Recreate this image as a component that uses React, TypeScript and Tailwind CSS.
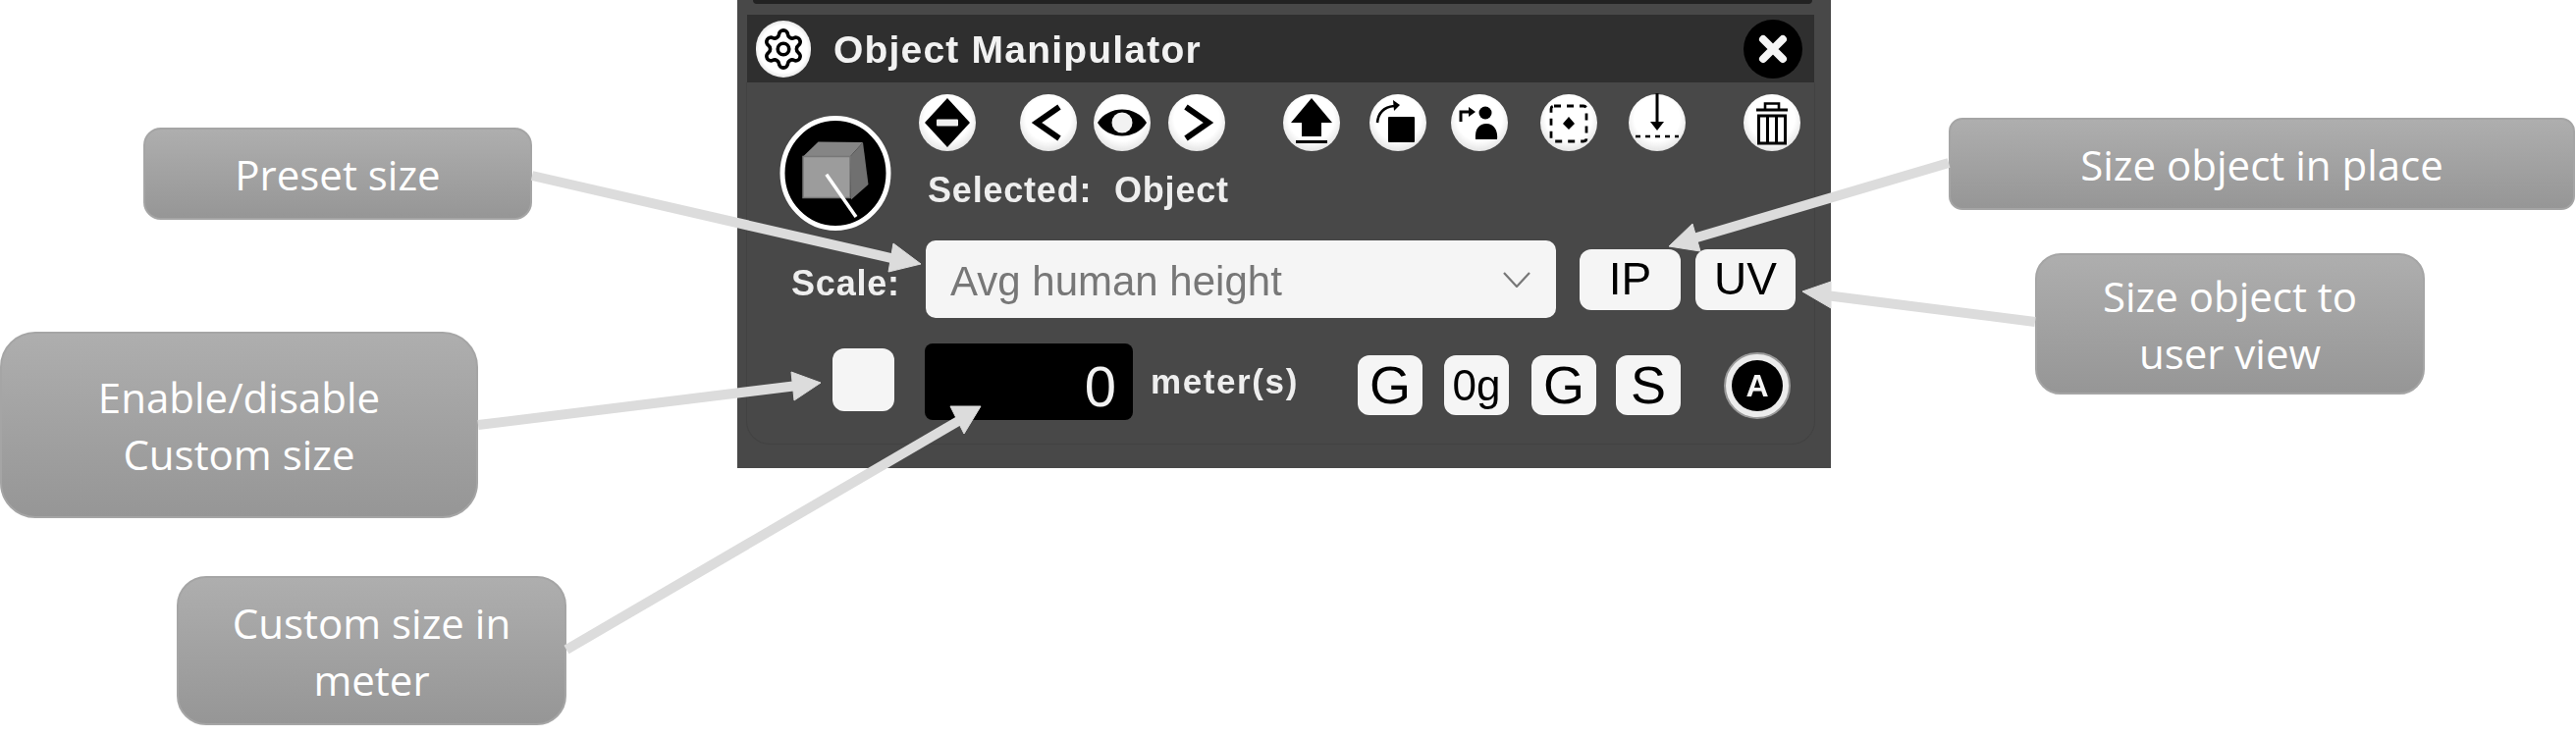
import React from "react";
import { Settings } from "lucide-react";

const callout =
  "absolute flex items-center justify-center text-center text-white font-['Open_Sans',sans-serif] text-[42px] leading-[58px] pt-[2px] border-2 border-[#a5a5a5] bg-gradient-to-b from-[#aeaeae] to-[#969696]";

function Round({ ml, children }: { ml: string; children: React.ReactNode }) {
  return (
    <div
      className={`${ml} w-[58px] h-[58px] shrink-0 rounded-full bg-[radial-gradient(circle_at_50%_42%,#ffffff_52%,#e2e2e2_78%,#9a9a9a_100%)]`}
    >
      <svg viewBox="0 0 58 58" className="w-[58px] h-[58px] overflow-visible">
        {children}
      </svg>
    </div>
  );
}

function Key({ ml, label, w, h, size }: { ml: string; label: string; w: string; h: string; size: string }) {
  return (
    <div
      className={`${ml} ${w} ${h} ${size} shrink-0 flex items-center justify-center rounded-[12px] bg-[#f5f5f5] text-black font-['Liberation_Sans',sans-serif]`}
    >
      {label}
    </div>
  );
}

export default function App() {
  return (
    <div className="relative w-[2624px] h-[751px] bg-white overflow-hidden font-['Liberation_Sans',sans-serif]">
      <div className="ml-[751px] w-[1114px] h-[477px] bg-[#484848] blur-[0.6px]">
        <div className="ml-[16px] w-[1079px] h-[4px] bg-[#222222] rounded-b-[6px]" />
        <div className="mt-[11px] ml-[10px] w-[1087px] h-[69px] bg-[#2f2f2f] flex items-center">
          <div className="ml-[9px] w-[56px] h-[58px] rounded-full bg-[radial-gradient(circle,#ffffff_60%,#cfcfcf_85%,#777777_100%)] flex items-center justify-center">
            <Settings size={46} strokeWidth={1.9} color="#000000" />
          </div>
          <span className="ml-[23px] pt-[3px] text-[39px] font-bold text-[#f2f2f2] tracking-[1.2px]">Object Manipulator</span>
          <div className="ml-auto mr-[12px] w-[60px] h-[60px] rounded-full bg-black flex items-center justify-center">
            <svg viewBox="0 0 60 60" className="w-[60px] h-[60px]">
              <path d="M20 20 L40 40 M40 20 L20 40" stroke="#f5f5f5" strokeWidth="8" strokeLinecap="round" />
            </svg>
          </div>
        </div>

        <div className="ml-[9px] w-[1089px] h-[369px] border-x border-b border-[#424242] rounded-b-[24px]">
          <div className="flex h-[161px] pt-[12px]">
            <div className="ml-[33px] mt-[22px] w-[114px] h-[117px] shrink-0">
              <svg viewBox="0 0 114 117" className="w-[114px] h-[117px]">
                <ellipse cx="57" cy="58.5" rx="54" ry="56" fill="#000000" stroke="#ffffff" strokeWidth="5" />
                <path d="M24 41.5 L39.5 26.5 L85 27 L72 41.5 Z" fill="#858585" />
                <path d="M72 41.5 L85 27 L90.5 70 L73 85.5 Z" fill="#707070" />
                <rect x="24" y="41.5" width="48" height="42" fill="#9c9c9c" stroke="#777777" strokeWidth="1.5" />
                <line x1="47.8" y1="59.8" x2="78" y2="103" stroke="#ffffff" strokeWidth="3.5" />
              </svg>
            </div>
            <div className="ml-[28px] flex flex-col">
              <div className="flex">
                <Round ml="ml-0">
                  <path d="M29 4 L52 29 L29 54 L6 29 Z" fill="#000" />
                  <rect x="18" y="25.5" width="22" height="7" rx="1" fill="#eeeeee" />
                </Round>
                <Round ml="ml-[45px]">
                  <path d="M40 13 L17 29 L40 45" fill="none" stroke="#000" strokeWidth="6" />
                </Round>
                <Round ml="ml-[17px]">
                  <path d="M4 29 C15 11 43 11 54 29 C43 47 15 47 4 29 Z" fill="#000" />
                  <circle cx="29" cy="29" r="10.5" fill="#f2f2f2" />
                </Round>
                <Round ml="ml-[18px]">
                  <path d="M18 13 L41 29 L18 45" fill="none" stroke="#000" strokeWidth="6" />
                </Round>
                <Round ml="ml-[59px]">
                  <path d="M29 4 L50 29 L39 29 L39 43 L19 43 L19 29 L8 29 Z" fill="#000" />
                  <rect x="13" y="47" width="32" height="3" fill="#000" />
                </Round>
                <Round ml="ml-[30px]">
                  <rect x="19" y="23" width="27" height="26" rx="1" fill="#000" />
                  <path d="M8 29 C9 19 15 13 25 12" fill="none" stroke="#000" strokeWidth="2.6" />
                  <path d="M24 6 L31 11 L25 17 Z" fill="#000" />
                </Round>
                <Round ml="ml-[25px]">
                  <circle cx="35" cy="19" r="6.5" fill="#000" />
                  <path d="M25 46 C24 35 29 30 36 30 C44 30 48 37 47 46 Z" fill="#000" />
                  <path d="M10 28 L10 18 L19 18" fill="none" stroke="#000" strokeWidth="3" />
                  <path d="M18 13 L25 18 L18 23 Z" fill="#000" />
                </Round>
                <Round ml="ml-[33px]">
                  <rect x="11" y="12" width="36" height="36" rx="3" fill="none" stroke="#000" strokeWidth="2.8" strokeDasharray="7 6" />
                  <path d="M29 23 L35 30 L29 36 L23 30 Z" fill="#000" />
                </Round>
                <Round ml="ml-[32px]">
                  <rect x="27.5" y="-1" width="3" height="32" fill="#000" />
                  <path d="M22 28 L36 28 L29 37 Z" fill="#000" />
                  <line x1="7" y1="43" x2="51" y2="43" stroke="#000" strokeWidth="2.6" strokeDasharray="5 5" />
                </Round>
                <Round ml="ml-[59px]">
                  <path d="M13 16 L45 16" stroke="#000" strokeWidth="3" />
                  <path d="M22 15 L22 9.5 L36 9.5 L36 15" fill="none" stroke="#000" strokeWidth="2.6" />
                  <rect x="15.5" y="22" width="27" height="28" fill="none" stroke="#000" strokeWidth="3" />
                  <path d="M24.5 22 L24.5 50 M33.5 22 L33.5 50" stroke="#000" strokeWidth="3" />
                </Round>
              </div>
              <div className="mt-[15px] ml-[9px] flex text-[36px] leading-[50px] font-bold text-[#eeeeee] tracking-[0.8px]">
                <span className="w-[190px]">Selected:</span>
                <span>Object</span>
              </div>
            </div>
          </div>

          <div className="flex items-center h-[79px]">
            <div className="w-[182px] pl-[45px] pt-[8px] text-[36px] font-bold text-[#eeeeee] tracking-[0.8px]">Scale:</div>
            <div className="w-[642px] h-[79px] shrink-0 rounded-[10px] bg-[#f5f5f5] flex items-center pl-[25px] pr-[26px] text-[42px] text-[#777777]">
              <span className="pt-[4px]">Avg human height</span>
              <svg viewBox="0 0 28 16" className="ml-auto w-[28px] h-[16px]">
                <path d="M1 1 L14 15 L27 1" fill="none" stroke="#777777" strokeWidth="2.2" />
              </svg>
            </div>
            <Key ml="ml-[24px]" label="IP" w="w-[103px]" h="h-[62px]" size="text-[46px]" />
            <Key ml="ml-[15px]" label="UV" w="w-[102px]" h="h-[62px]" size="text-[46px]" />
          </div>

          <div className="flex mt-[26px] h-[78px]">
            <div className="ml-[87px] mt-[5px] w-[63px] h-[64px] rounded-[12px] bg-[#f5f5f5]" />
            <div className="ml-[31px] w-[212px] h-[78px] rounded-[8px] bg-black flex items-center justify-end pr-[17px] pt-[8px] text-[58px] text-[#f2f2f2]">
              0
            </div>
            <div className="ml-[18px] w-[211px] h-[78px] flex items-center text-[35px] font-bold text-[#eeeeee] tracking-[1.6px]">meter(s)</div>
            <Key ml="mt-[12px]" label="G" w="w-[66px]" h="h-[61px]" size="text-[54px]" />
            <Key ml="ml-[22px] mt-[12px]" label="0g" w="w-[66px]" h="h-[61px]" size="text-[44px]" />
            <Key ml="ml-[23px] mt-[12px]" label="G" w="w-[66px]" h="h-[61px]" size="text-[54px]" />
            <Key ml="ml-[20px] mt-[12px]" label="S" w="w-[66px]" h="h-[61px]" size="text-[54px]" />
            <div className="ml-[44px] mt-[9px] w-[68px] h-[68px] rounded-full bg-[#ececec] border-[2px] border-[#9a9a9a] flex items-center justify-center">
              <div className="w-[52px] h-[52px] rounded-full bg-black flex items-center justify-center text-[32px] font-bold text-[#f5f5f5]">
                A
              </div>
            </div>
          </div>
        </div>
      </div>

      <div className={`${callout} left-[146px] top-[130px] w-[396px] h-[94px] rounded-[18px]`}>Preset size</div>
      <div className={`${callout} left-0 top-[338px] w-[487px] h-[190px] rounded-[36px]`}>
        <span>
          Enable/disable
          <br />
          Custom size
        </span>
      </div>
      <div className={`${callout} left-[180px] top-[587px] w-[397px] h-[152px] rounded-[30px]`}>
        <span>
          Custom size in
          <br />
          meter
        </span>
      </div>
      <div className={`${callout} left-[1985px] top-[120px] w-[638px] h-[94px] rounded-[14px]`}>Size object in place</div>
      <div className={`${callout} left-[2073px] top-[258px] w-[397px] h-[144px] rounded-[26px]`}>
        <span>
          Size object to
          <br />
          user view
        </span>
      </div>

      <svg viewBox="0 0 2624 751" className="absolute left-0 top-0 w-[2624px] h-[751px] pointer-events-none">
        <g fill="#dcdcdc" stroke="#dcdcdc">
          <line x1="542" y1="179" x2="912" y2="264" strokeWidth="10" />
          <polygon points="938,269 910,248 905,277" />
          <line x1="487" y1="433" x2="812" y2="393" strokeWidth="10" />
          <polygon points="836,390 806,379 809,408" />
          <line x1="577" y1="662" x2="978" y2="428" strokeWidth="10" />
          <polygon points="999,414 968,414 982,442" />
          <line x1="1985" y1="166" x2="1725" y2="243" strokeWidth="10" />
          <polygon points="1700,251 1724,228 1732,256" />
          <line x1="2073" y1="328" x2="1860" y2="301" strokeWidth="10" />
          <polygon points="1836,297 1865,287 1865,314" />
        </g>
      </svg>
    </div>
  );
}
